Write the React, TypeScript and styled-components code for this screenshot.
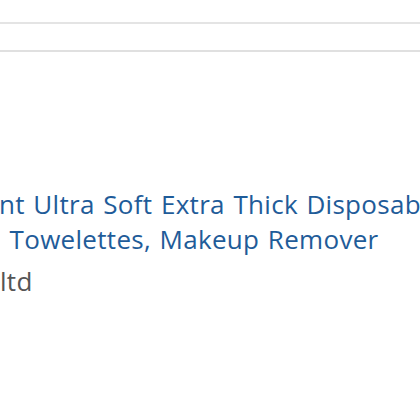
import React from "react";
import styled, { createGlobalStyle } from "styled-components";

const Global = createGlobalStyle`
  html, body { margin: 0; padding: 0; background: #fff; }
  body { font-family: "Open Sans", "Noto Sans", sans-serif; overflow: hidden; }
`;

const Page = styled.div`
  width: 420px;
  height: 420px;
  overflow: hidden;
  display: flex;
  flex-direction: column;
  padding-top: 22px;
  box-sizing: border-box;
`;

const Band = styled.div`
  height: 26px;
  border-top: 2px solid #e4e4e4;
  border-bottom: 2px solid #e0e0e0;
`;

const Info = styled.div`
  margin-top: 135px;
  display: flex;
  flex-direction: column;
`;

const TitleLine = styled.div<{ $indent: number }>`
  white-space: nowrap;
  font-size: 26px;
  letter-spacing: 0.3px;
  word-spacing: 1.5px;
  line-height: 35px;
  color: #1f5c99;
  text-indent: ${(p) => p.$indent}px;
`;

const Brand = styled.div`
  white-space: nowrap;
  font-size: 26px;
  letter-spacing: 0.3px;
  line-height: 35px;
  margin-top: 7px;
  color: #555;
`;

export default function App() {
  return (
    <>
      <Global />
      <Page>
        <Band />
        <Info>
          <TitleLine $indent={-1}>nt Ultra Soft Extra Thick Disposable Face</TitleLine>
          <TitleLine $indent={-6}>, Towelettes, Makeup Remover</TitleLine>
          <Brand>ltd</Brand>
        </Info>
      </Page>
    </>
  );
}
